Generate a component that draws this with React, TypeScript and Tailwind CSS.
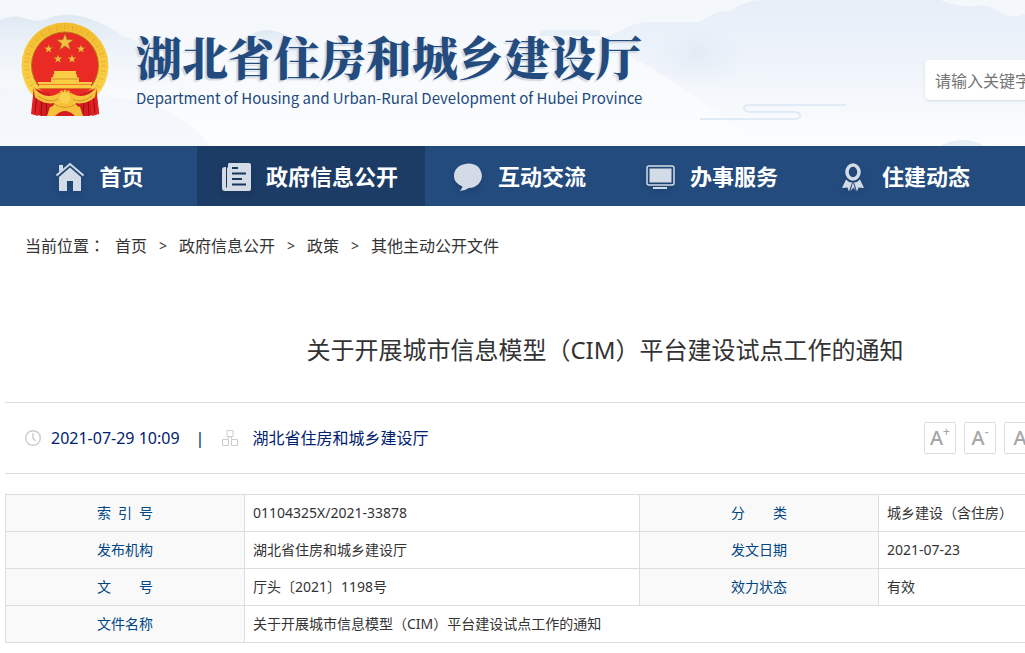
import type { ReactNode } from "react";

const STAR = "M0-10 2.4-3.2 9.5-3.1 3.8 1.2 5.9 8.1 0 4-5.9 8.1-3.8 1.2-9.5-3.1-2.4-3.2Z";

const navItems = [
  { label: "首页", icon: <HomeIcon />, className: "w-[197px] pl-1" },
  {
    label: "政府信息公开",
    icon: <NewsIcon />,
    className: "w-[228px] bg-[#1c3b65]",
  },
  { label: "互动交流", icon: <ChatIcon />, className: "w-48" },
  { label: "办事服务", icon: <ScreenIcon />, className: "w-48" },
  { label: "住建动态", icon: <RibbonIcon />, className: "w-48" },
];

const crumbs = ["首页", "政府信息公开", "政策", "其他主动公开文件"];

function Emblem() {
  return (
    <svg className="h-[95px] w-[88px] shrink-0" viewBox="0 0 88 95">
      <defs>
        <linearGradient id="gold" x1="0" y1="0" x2="0" y2="1">
          <stop offset="0" stopColor="#f3bd2f" />
          <stop offset="0.5" stopColor="#f8cb42" />
          <stop offset="1" stopColor="#fbd84c" />
        </linearGradient>
      </defs>
      <circle cx="44" cy="44" r="43.5" fill="url(#gold)" />
      <circle
        cx="44"
        cy="44"
        r="38.5"
        fill="none"
        stroke="#dc9a1c"
        strokeWidth="5"
        strokeDasharray="1 3 2 2"
        opacity="0.35"
      />
      <circle cx="44" cy="43.5" r="33.5" fill="#ea2a24" stroke="#b8791a" />
      <g fill="#f3bf3e" stroke="#a3541c" strokeWidth="0.6">
        <path d={STAR} transform="translate(44 20.5) scale(.9)" />
        <path d={STAR} transform="translate(27.5 27) scale(.46)" />
        <path d={STAR} transform="translate(60 27) scale(.46)" />
        <path d={STAR} transform="translate(37 37) scale(.46)" />
        <path d={STAR} transform="translate(51 37) scale(.46)" />
      </g>
      <g fill="#fbcd45">
        <path d="M33 49h22v2.500h-22zM32 53l2-2h20l2 2v1h-24zM30 56l3-2h22l3 2v4h-28z" />
        <path d="M17 60h54v2h-54zM18 62.500h52v4h-52z" />
      </g>
      <path d="M30 57h28M17 66.500h54" stroke="#c87818" strokeWidth="0.7" />
      <path d="M18 67H70Q60 74 52 72Q44 67 36 72Q28 74 18 67Z" fill="#ea2a24" />
      <path d="M13 66 36 75 28 94H20L11 91Z" fill="#d51c20" />
      <path d="M75 66 52 75 60 94H68L78 91Z" fill="#d51c20" />
      <path d="M13 65 10 92 17 94 19 80Z" fill="#e32022" />
      <path d="M75 65 78 92 71 94 69 80Z" fill="#e32022" />
      <path
        d="M16 72 14 91M21 77 20 93M25 80 26 92M72 72 74 91M67 77 68 93M63 80 62 92"
        stroke="#950f16"
        strokeWidth="1"
      />
      <path
        d="M12 64C20 76 30 75 36 72Q44 67 52 72C58 75 68 76 76 64L74 75C68 81 58 83 51 80H37C30 83 20 81 14 75Z"
        fill="#f7c440"
      />
      <path
        d="M17 74Q28 82 37 77M71 74Q60 82 51 77"
        fill="none"
        stroke="#c98720"
        strokeWidth="0.8"
      />
      <path d="M26 94 29 85 38 82H50L59 85 62 94Z" fill="#f6c13a" />
      <path d="M34 94Q44 84 54 94Z" fill="#d51c20" />
      <circle cx="44" cy="76" r="5.500" fill="#fbd04c" />
      <circle
        cx="44"
        cy="76"
        r="7"
        fill="none"
        stroke="#f6bd35"
        strokeWidth="2.500"
        strokeDasharray="2.500 1"
      />
      <path
        d="M33 82Q44 89 55 82"
        fill="none"
        stroke="#cb8822"
        strokeWidth="0.8"
      />
    </svg>
  );
}

function HeaderScenery() {
  return (
    <svg
      className="absolute inset-0 h-full w-full"
      viewBox="0 0 1025 146"
      preserveAspectRatio="xMinYMin slice"
      aria-hidden="true"
    >
      <defs>
        <linearGradient id="sky" x1="0" y1="0" x2="0" y2="1">
          <stop offset="0" stopColor="#f4f7fb" />
          <stop offset="1" stopColor="#fcfdfe" />
        </linearGradient>
        <linearGradient id="hill" x1="0" y1="0" x2="0" y2="1">
          <stop offset="0" stopColor="#dfe9f3" />
          <stop offset="1" stopColor="#f6f9fc" stopOpacity="0" />
        </linearGradient>
        <linearGradient id="ridge" x1="0" y1="0" x2="0" y2="1">
          <stop offset="0" stopColor="#e7eef8" />
          <stop offset="0.5" stopColor="#f0f5fb" />
          <stop offset="1" stopColor="#f7fafd" stopOpacity="0" />
        </linearGradient>
        <radialGradient id="mound" cx="0.5" cy="0.45" r="0.6">
          <stop offset="0" stopColor="#e2ebf5" />
          <stop offset="1" stopColor="#e8eff8" stopOpacity="0" />
        </radialGradient>
      </defs>
      <rect width="1025" height="146" fill="url(#sky)" />
      <path
        d="M0 20Q12 14 24 18T44 20Q66 10 90 19T122 36Q144 42 160 60T220 110H0Z"
        fill="url(#hill)"
      />
      <path d="M0 88Q60 90 120 98T210 146H0Z" fill="#eef4fa" opacity="0.5" />
      <path d="M225 60Q250 28 268 30T300 44L350 76Z" fill="url(#hill)" />
      <path
        d="M600 40Q618 32 630 26Q640 22 648 22T700 22Q715 10 730 11Q745 0 765 0H940Q960 8 975 6T1000 12T1025 14V146H760Q680 80 600 40Z"
        fill="url(#ridge)"
      />
      <ellipse cx="698" cy="56" rx="46" ry="30" fill="url(#mound)" />
      <path d="M540 33H600" stroke="#e6eff8" strokeWidth="6" />
      <path
        d="M846 105H750C741 105 742 112 752 112H793C803 112 802 119 794 119H700"
        fill="none"
        stroke="#e0ebf5"
        strokeWidth="2"
      />
      <path d="M940 146Q962 134 985 146Z" fill="#e6eef6" />
    </svg>
  );
}

function NavSvg({ children }: { children: ReactNode }) {
  return (
    <svg
      className="mt-0.5 h-[30px] w-[30px] shrink-0 text-[#d3dce6] drop-shadow-md"
      viewBox="0 0 30 30"
      fill="currentColor"
      aria-hidden="true"
    >
      {children}
    </svg>
  );
}

function HomeIcon() {
  return (
    <NavSvg>
      <path d="M4 3h4v4L4 10Z" />
      <path
        d="M1.500 13.500 15 2 28.500 13.500"
        fill="none"
        stroke="currentColor"
        strokeWidth="2"
      />
      <path d="M15 5.500 26 15V29H18V19H12V29H4V15Z" />
    </NavSvg>
  );
}

function NewsIcon() {
  return (
    <NavSvg>
      <path
        fillRule="evenodd"
        d="M7 1H27Q29 1 29 3V27Q29 29 27 29H6V3Q6 1 7 1ZM10 5V7H16V5ZM10 10.500V12.500H24V10.500ZM10 16V18H20V16ZM10 21.500V23.500H24V21.500Z"
      />
      <path d="M3 5H4V25.500H5V5.500H6V29H3Q0 29 0 26V8Q0 5 3 5Z" />
    </NavSvg>
  );
}

function ChatIcon() {
  return (
    <NavSvg>
      <path
        d="M12.500 1.500C5 2 0 7 0 14C0 19 2.500 22.500 7.500 25Q7 27.500 5 29.500Q10 29 13 26.500C19 26.500 24 21.500 24.500 14.500C24.500 7 20 1.500 12.500 1.500Z"
        transform="scale(1.140 .98)"
      />
    </NavSvg>
  );
}

function ScreenIcon() {
  return (
    <NavSvg>
      <rect
        x="1"
        y="4"
        width="27"
        height="19"
        rx="2"
        fill="none"
        stroke="currentColor"
        strokeWidth="1.500"
      />
      <path d="M3.500 6.500H25.500V20.500H3.500ZM7 25H21V27H7Z" />
    </NavSvg>
  );
}

function RibbonIcon() {
  return (
    <NavSvg>
      <ellipse
        cx="15"
        cy="10"
        rx="6"
        ry="7"
        fill="none"
        stroke="currentColor"
        strokeWidth="3.500"
      />
      <path d="M8 17.500Q10.500 20.500 14 20.500L11 29.500 9.500 25.500 4 26ZM22 17.500Q19.500 20.500 16 20.500L19 29.500 20.500 25.500 26 26ZM15 20 17.500 29 15.500 25.500 12.500 29Z" />
    </NavSvg>
  );
}

function LabelCell({ children }: { children: ReactNode }) {
  return (
    <th
      scope="row"
      className="h-[37px] border border-[#ddd] bg-[#f9f9f9] font-normal whitespace-pre text-[#004684]"
    >
      {children}
    </th>
  );
}

function ValueCell({
  children,
  colSpan,
}: {
  children: ReactNode;
  colSpan?: number;
}) {
  return (
    <td colSpan={colSpan} className="border border-[#ddd] px-2">
      {children}
    </td>
  );
}

export default function App() {
  return (
    <div className="min-h-screen overflow-x-hidden bg-white font-['Noto_Sans','Noto_Sans_CJK_SC',sans-serif] text-[#333]">
      <header className="relative px-[5px]">
        <HeaderScenery />
        <div className="relative mx-auto flex h-[146px] w-[1200px] items-start pl-4">
          <a href="#" className="flex text-[#234b7e]">
            <span className="pt-[22px]">
              <Emblem />
            </span>
            <span className="ml-[27px] pt-6">
              <h1 className="font-['Noto_Serif_CJK_SC','Noto_Sans_CJK_SC',serif] text-[46px] leading-[62px] font-black [text-shadow:-2px_2px_1px_#d5dae2]">
                湖北省住房和城乡建设厅
              </h1>
              <p className="font-['Noto_Sans_CJK_SC',sans-serif] text-[15px] leading-6 whitespace-nowrap">
                Department of Housing and Urban-Rural Development of Hubei
                Province
              </p>
            </span>
          </a>
          <input
            type="text"
            aria-label="请输入关键字"
            placeholder="请输入关键字"
            className="mt-[60px] ml-auto h-10 w-[280px] rounded-sm bg-white px-2.5 pt-0.5 text-base shadow-sm outline-none placeholder:text-[#757575]"
          />
        </div>
      </header>

      <nav className="bg-[#234b7e]">
        <div className="mx-auto flex w-[1210px]">
          {navItems.map((item) => (
            <a
              key={item.label}
              href="#"
              className={`flex h-[60px] shrink-0 items-center justify-center gap-3.5 pr-0.5 text-[22px] leading-8 font-bold text-white ${item.className}`}
            >
              {item.icon}
              {item.label}
            </a>
          ))}
        </div>
      </nav>

      <main className="px-[5px]">
        <div className="mx-auto w-[1200px]">
          <div className="flex h-20 items-center pl-5 text-base leading-6">
            <span className="mr-2.5">
              当前位置
              <span className="font-['Noto_Sans_CJK_TC',sans-serif] leading-none">
                ：
              </span>
            </span>
            {crumbs.map((crumb, i) => (
              <span key={crumb} className="flex">
                {i > 0 && (
                  <span className="w-8 text-center text-sm leading-6">
                    &gt;
                  </span>
                )}
                <a href="#">{crumb}</a>
              </span>
            ))}
          </div>

          <h2 className="pt-11 pb-8 text-center text-2xl leading-10">
            关于开展城市信息模型（CIM）平台建设试点工作的通知
          </h2>

          <div className="flex h-[72px] items-center border-y border-[#ddd] pl-5 text-base text-[#00206f]">
            <svg
              className="mr-2.5 h-4 w-4 text-[#ccc]"
              viewBox="0 0 16 16"
              fill="none"
              stroke="currentColor"
              strokeWidth="1.4"
            >
              <circle cx="8" cy="8" r="7.300" />
              <path d="M8 3V8.500L10.500 11" />
            </svg>
            <time dateTime="2021-07-29T10:09">2021-07-29 10:09</time>
            <span className="mx-4">|</span>
            <svg
              className="mr-3.5 ml-0.5 h-4 w-4 text-[#ccc]"
              viewBox="0 0 16 16"
              fill="none"
              stroke="currentColor"
            >
              <path d="M5 .5H11V6.500H5ZM.5 9.500H6.500V15.500H.5ZM9.500 9.500H15.500V15.500H9.500ZM6.500 6.500V9.500M9.500 6.500V9.500" />
            </svg>
            <span>湖北省住房和城乡建设厅</span>
            <div className="ml-auto flex w-[281px] gap-2 text-xl text-[#a6a6a6]">
              {["+", "-", ""].map((sign) => (
                <button
                  key={sign}
                  type="button"
                  className="flex h-8 w-8 items-center justify-center rounded-xs border border-[#ddd] font-medium"
                >
                  A
                  {sign && <sup className="text-xs leading-3">{sign}</sup>}
                </button>
              ))}
            </div>
          </div>

          <table className="mt-5 w-full table-fixed border-collapse text-sm leading-5">
            <colgroup>
              <col className="w-[239px]" />
              <col className="w-[395px]" />
              <col className="w-[239px]" />
              <col />
            </colgroup>
            <tbody>
              <tr>
                <LabelCell>{"索\u2002引\u2002号"}</LabelCell>
                <ValueCell>01104325X/2021-33878</ValueCell>
                <LabelCell>{"分\u3000\u3000类"}</LabelCell>
                <ValueCell>城乡建设（含住房）</ValueCell>
              </tr>
              <tr>
                <LabelCell>发布机构</LabelCell>
                <ValueCell>湖北省住房和城乡建设厅</ValueCell>
                <LabelCell>发文日期</LabelCell>
                <ValueCell>2021-07-23</ValueCell>
              </tr>
              <tr>
                <LabelCell>{"文\u3000\u3000号"}</LabelCell>
                <ValueCell>厅头〔2021〕1198号</ValueCell>
                <LabelCell>效力状态</LabelCell>
                <ValueCell>有效</ValueCell>
              </tr>
              <tr>
                <LabelCell>文件名称</LabelCell>
                <ValueCell colSpan={3}>
                  关于开展城市信息模型（CIM）平台建设试点工作的通知
                </ValueCell>
              </tr>
            </tbody>
          </table>
        </div>
      </main>
    </div>
  );
}
